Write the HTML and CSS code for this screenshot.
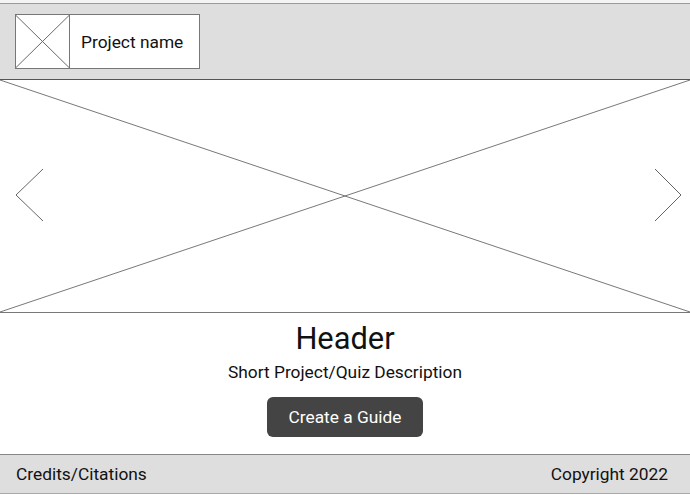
FILE: index.html
```html
<!DOCTYPE html>
<html>
<head>
<meta charset="utf-8">
<link rel="stylesheet" href="styles.css">
</head>
<body>
<div class="topstrip"></div>
<header class="navbar">
  <div class="brand">
    <svg class="logo" width="54" height="53" viewBox="0 0 54 53">
      <line x1="0" y1="0" x2="54" y2="53" stroke="#666" stroke-width="1"/>
      <line x1="54" y1="0" x2="0" y2="53" stroke="#666" stroke-width="1"/>
    </svg>
    <span class="brand-name">Project name</span>
  </div>
</header>
<section class="hero">
  <svg class="hero-svg" width="690" height="232" viewBox="0 0 690 232">
    <line x1="0" y1="0" x2="690" y2="232" stroke="#555" stroke-width="0.8"/>
    <line x1="690" y1="0" x2="0" y2="232" stroke="#555" stroke-width="0.8"/>
    <polyline points="43,89 16,115 43,141" fill="none" stroke="#555" stroke-width="0.9"/>
    <polyline points="655,89 681,115 655,141" fill="none" stroke="#555" stroke-width="0.9"/>
  </svg>
</section>
<main class="content">
  <h1 class="title">Header</h1>
  <p class="desc">Short Project/Quiz Description</p>
  <button class="cta">Create a Guide</button>
</main>
<footer class="footer">
  <span>Credits/Citations</span>
  <span>Copyright 2022</span>
</footer>
</body>
</html>
```
FILE: styles.css
```css
* { box-sizing: border-box; }
html, body { margin: 0; padding: 0; background: #fff; }
body {
  width: 690px;
  height: 495px;
  overflow: hidden;
  font-family: Roboto, "Liberation Sans", sans-serif;
  color: #111;
}
.topstrip { height: 3px; background: #f4f4f4; }
.navbar {
  height: 77px;
  background: #dedede;
  border-top: 1px solid #9a9a9a;
  border-bottom: 1px solid #555;
  padding: 10px 0 0 15px;
}
.brand {
  display: flex;
  align-items: stretch;
  width: 185px;
  height: 55px;
  background: #fff;
  border: 1px solid #777;
}
.logo {
  display: block;
  width: 54px;
  height: 53px;
  border-right: 1px solid #777;
  flex: none;
}
.brand-name {
  display: flex;
  align-items: center;
  padding-left: 11px;
  font-size: 17.33px;
  color: #111;
}
.hero {
  height: 233px;
  border-bottom: 1px solid #777;
}
.hero-svg { display: block; }
.content {
  display: flex;
  flex-direction: column;
  align-items: center;
  height: 141px;
  padding-top: 9px;
}
.title {
  margin: 0;
  font-size: 30.8px;
  font-weight: 400;
  line-height: 34px;
}
.desc {
  margin: 6px 0 0;
  font-size: 17.33px;
  line-height: 20px;
}
.cta {
  margin-top: 15px;
  width: 156px;
  height: 40px;
  border: none;
  border-radius: 6px;
  background: #444;
  color: #fff;
  font-family: Roboto, "Liberation Sans", sans-serif;
  font-size: 17.33px;
  padding: 0;
}
.footer {
  height: 40px;
  background: #dedede;
  border-top: 1px solid #888;
  border-bottom: 1px solid #aaa;
  display: flex;
  justify-content: space-between;
  align-items: center;
  padding: 0 22px 0 16px;
  font-size: 17.33px;
  color: #111;
}
```
